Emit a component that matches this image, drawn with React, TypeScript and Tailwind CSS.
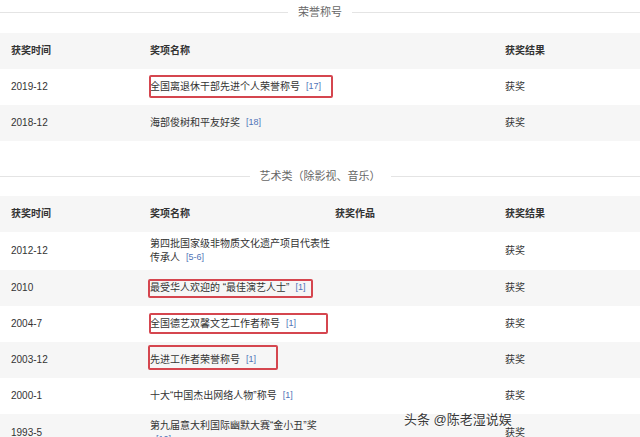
import React from "react";

const FONT = { fontFamily: '"Liberation Sans", "Noto Sans CJK SC", sans-serif' };

function Ref({ n }: { n: string }) {
  return (
    <sup className="ml-[6px] text-[9px] text-[#4f74b8] relative top-[-1px]">[{n}]</sup>
  );
}

function Title({ text }: { text: string }) {
  return (
    <div className="flex items-center h-[24px]">
      <div className="flex-1 h-px bg-[#e4e4e4]" />
      <div className="px-[10px] text-[11px] text-[#666]">{text}</div>
      <div className="flex-1 h-px bg-[#e4e4e4]" />
    </div>
  );
}

type Box = { left: number; top: number; w: number; h: number };

function RedBox({ b }: { b: Box }) {
  return (
    <div
      className="absolute border-2 border-[#d5464f] rounded-[2px] pointer-events-none"
      style={{ left: b.left, top: b.top, width: b.w, height: b.h }}
    />
  );
}

function Row({
  grey,
  h,
  date,
  name,
  work,
  result,
  box,
  bold,
  three,
}: {
  grey?: boolean;
  h: number;
  date: React.ReactNode;
  name: React.ReactNode;
  work?: React.ReactNode;
  result: React.ReactNode;
  box?: Box;
  bold?: boolean;
  three?: boolean;
}) {
  return (
    <div
      className={`flex items-center pl-[11px] text-[10px] leading-[14px] ${
        grey ? "bg-[#f6f6f6]" : "bg-white"
      } ${bold ? "font-bold text-[#333]" : "text-[#333]"}`}
      style={{ height: h }}
    >
      <div className="w-[139px] shrink-0">{date}</div>
      {three ? (
        <>
          <div className="w-[185px] shrink-0 relative">
            {name}
            {box && <RedBox b={box} />}
          </div>
          <div className="w-[170px] shrink-0">{work}</div>
        </>
      ) : (
        <div className="w-[355px] shrink-0 relative">
          {name}
          {box && <RedBox b={box} />}
        </div>
      )}
      <div className="flex-1">{result}</div>
    </div>
  );
}

export default function App() {
  return (
    <div className="w-[640px] h-[437px] overflow-hidden bg-white relative" style={FONT}>
      <Title text="荣誉称号" />
      <div className="mt-[9px]">
        <Row grey bold h={36} date="获奖时间" name="奖项名称" result="获奖结果" />
        <Row
          h={36}
          date="2019-12"
          name={
            <span>
              全国离退休干部先进个人荣誉称号
              <Ref n="17" />
            </span>
          }
          result="获奖"
          box={{ left: -1, top: -5, w: 184, h: 23 }}
        />
        <Row
          grey
          h={36}
          date="2018-12"
          name={
            <span>
              海部俊树和平友好奖
              <Ref n="18" />
            </span>
          }
          result="获奖"
        />
      </div>
      <div className="mt-[23px]">
        <Title text="艺术类（除影视、音乐）" />
      </div>
      <div className="mt-[8px]">
        <Row grey bold three h={36} date="获奖时间" name="奖项名称" work="获奖作品" result="获奖结果" />
        <Row
          three
          h={38}
          date="2012-12"
          name={
            <span>
              第四批国家级非物质文化遗产项目代表性
              <br />
              传承人
              <Ref n="5-6" />
            </span>
          }
          result="获奖"
        />
        <Row
          three
          grey
          h={36}
          date="2010"
          name={
            <span>
              最受华人欢迎的 “最佳演艺人士”
              <Ref n="1" />
            </span>
          }
          result="获奖"
          box={{ left: -2, top: -2, w: 165, h: 19 }}
        />
        <Row
          three
          h={36}
          date="2004-7"
          name={
            <span>
              全国德艺双馨文艺工作者称号
              <Ref n="1" />
            </span>
          }
          result="获奖"
          box={{ left: -1, top: -4, w: 179, h: 21 }}
        />
        <Row
          three
          grey
          h={36}
          date="2003-12"
          name={
            <span>
              先进工作者荣誉称号
              <Ref n="1" />
            </span>
          }
          result="获奖"
          box={{ left: -2, top: -8, w: 130, h: 25 }}
        />
        <Row
          three
          h={36}
          date="2000-1"
          name={
            <span>
              十大“中国杰出网络人物”称号
              <Ref n="1" />
            </span>
          }
          result="获奖"
        />
        <Row
          three
          grey
          h={38}
          date="1993-5"
          name={
            <span>
              第九届意大利国际幽默大赛“金小丑”奖
              <br />
              <Ref n="10" />
            </span>
          }
          result="获奖"
        />
      </div>
      <div
        className="absolute left-[404px] top-[411px] text-[13px] leading-[18px] text-[#3a3a3a] whitespace-nowrap"
        style={{ textShadow: "0 0 2px #fff, 0 0 2px #fff, 0 0 3px #fff" }}
      >
        头条 @陈老湿说娱
      </div>
    </div>
  );
}
